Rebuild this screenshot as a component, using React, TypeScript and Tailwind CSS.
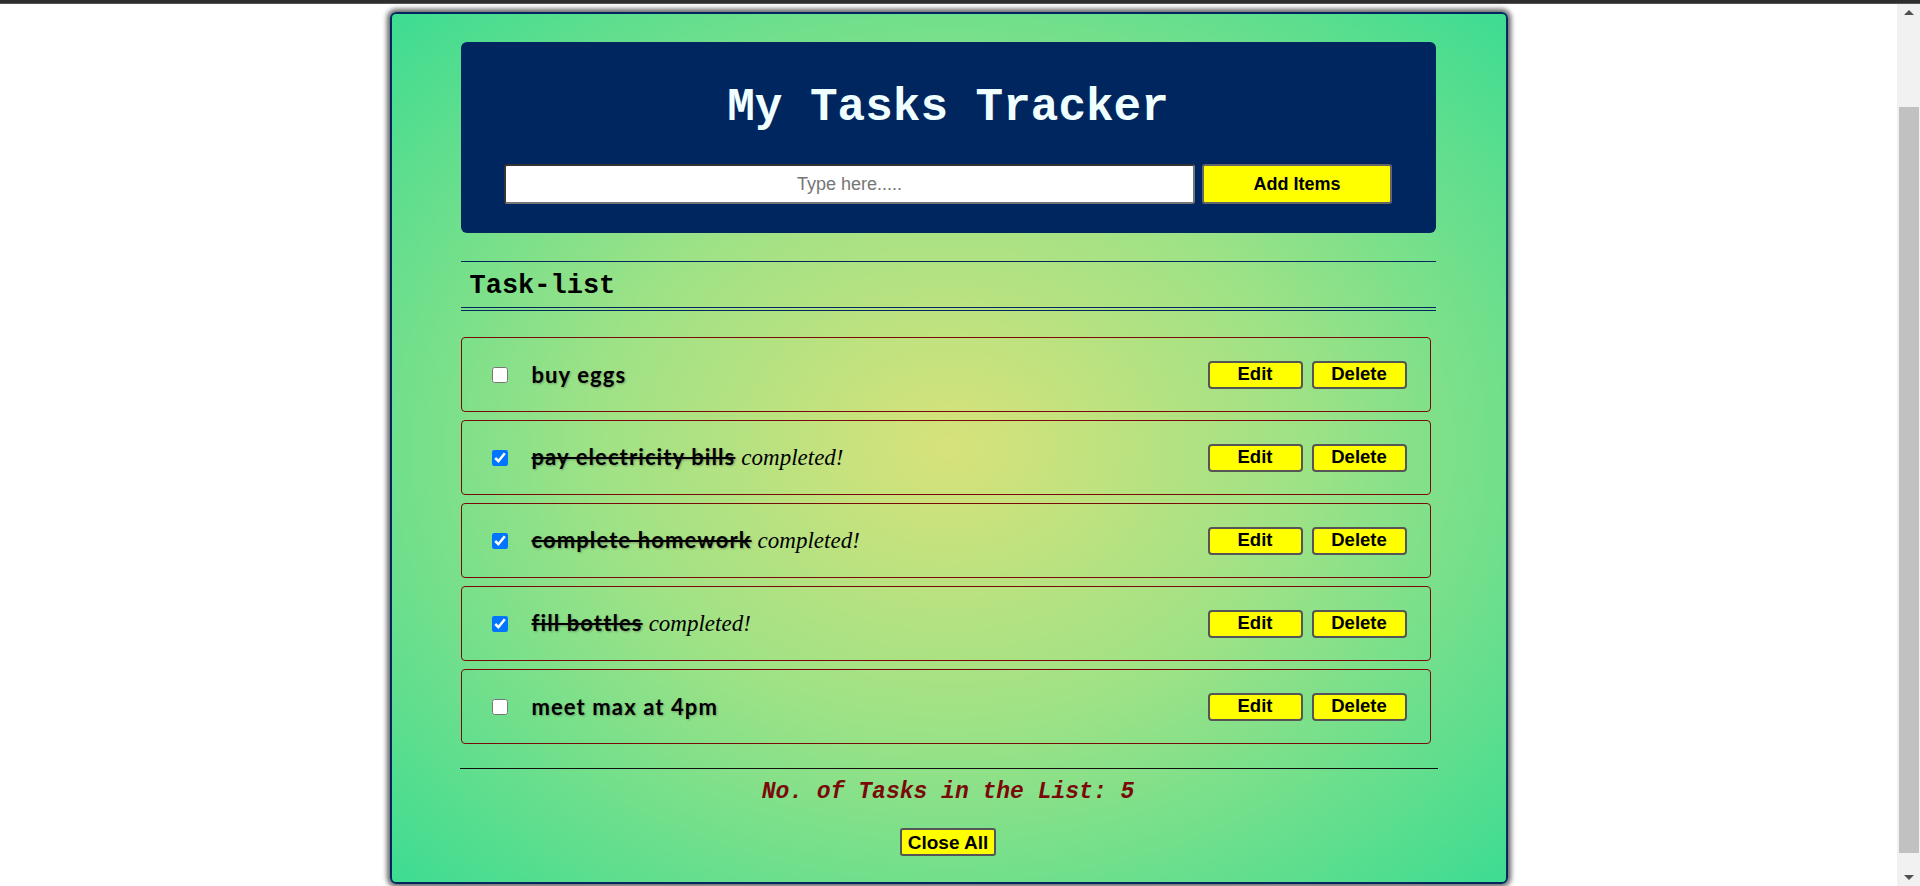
import React from "react";

type Task = { text: string; done: boolean };

const tasks: Task[] = [
  { text: "buy eggs", done: false },
  { text: "pay electricity bills", done: true },
  { text: "complete homework", done: true },
  { text: "fill bottles", done: true },
  { text: "meet max at 4pm", done: false },
];

function Row({ task }: { task: Task }) {
  return (
    <div className="w-[970px] h-[75px] flex items-center border border-[#7a0a0a] rounded-[4px] pl-[30px] pr-[23px]">
      <input
        type="checkbox"
        defaultChecked={task.done}
        className="w-[16px] h-[16px] m-0 shrink-0"
      />
      <div className="ml-[24px] flex-1 flex items-baseline">
        <span
          className={
            "font-['Lato','Open_Sans',sans-serif] font-bold text-[22px] tracking-[1.1px] text-black [text-shadow:1px_1px_2px_rgba(60,60,60,0.4)] " +
            (task.done ? "line-through" : "")
          }
        >
          {task.text}
        </span>
        {task.done && (
          <span className="ml-[6px] font-['Liberation_Serif',serif] italic text-[23px] text-black">
            completed!
          </span>
        )}
      </div>
      <div className="flex gap-[9px]">
        <button className="w-[95px] h-[28px] bg-[#ffff00] border-2 border-[#555] rounded-[4px] font-['Liberation_Sans',Arial,sans-serif] font-bold text-[18.5px] leading-none text-black">
          Edit
        </button>
        <button className="w-[95px] h-[28px] bg-[#ffff00] border-2 border-[#555] rounded-[4px] font-['Liberation_Sans',Arial,sans-serif] font-bold text-[18.5px] leading-none text-black">
          Delete
        </button>
      </div>
    </div>
  );
}

function Scrollbar() {
  return (
    <div className="w-[23px] shrink-0 bg-[#f1f1f1] flex flex-col">
      <div className="h-[17px] flex items-center justify-center">
        <div className="w-0 h-0 border-x-[5px] border-x-transparent border-b-[5px] border-b-[#505050]" />
      </div>
      <div className="h-[86px]" />
      <div className="h-[746px] w-[20px] ml-[2px] bg-[#c1c1c1]" />
      <div className="flex-1" />
      <div className="h-[17px] flex items-center justify-center">
        <div className="w-0 h-0 border-x-[5px] border-x-transparent border-t-[5px] border-t-[#505050]" />
      </div>
    </div>
  );
}

export default function App() {
  return (
    <div className="h-[886px] flex flex-col overflow-hidden bg-white font-['Liberation_Sans',Arial,sans-serif]">
      <div className="h-[4px] shrink-0 bg-[#2e2e2e] border-b border-[#555]" />
      <div className="flex flex-1 min-h-0">
        <div className="flex-1 min-w-0 flex justify-center pt-[8px]">
          <div className="w-[1118px] h-[872px] shrink-0 border-2 border-[#00265f] rounded-[6px] shadow-[0_0_5px_3px_rgba(0,0,0,0.6)] bg-[radial-gradient(ellipse_at_center,#d8e27a_0%,#9ee286_45%,#3ddc92_100%)] pt-[28px] px-[69px] flex flex-col items-start">
            <div className="w-[975px] h-[191px] bg-[#00265f] rounded-[6px] flex flex-col items-center pt-[40px]">
              <h1 className="h-[52px] leading-[52px] font-['Liberation_Mono','Courier_New',monospace] font-bold text-[46px] text-[#f0ffff]">
                My Tasks Tracker
              </h1>
              <div className="mt-[30px] flex gap-[7px] items-center">
                <input
                  type="text"
                  placeholder="Type here....."
                  className="w-[691px] h-[40px] bg-white border-2 border-t-[#333] border-l-[#333] border-b-[#777] border-r-[#777] rounded-[3px] text-center text-[18px] placeholder:text-[#757575] font-['Liberation_Sans',Arial,sans-serif] outline-none"
                />
                <button className="w-[190px] h-[40px] bg-[#ffff00] border-2 border-[#666] rounded-[3px] font-['Liberation_Sans',Arial,sans-serif] font-bold text-[18px] text-black">
                  Add Items
                </button>
              </div>
            </div>

            <div className="mt-[28px] w-[975px] h-[50px] border-t-[1.5px] border-t-[#00265f] border-b-[4px] border-double border-b-[#00265f] flex items-center pl-[9px]">
              <h2 className="font-['Liberation_Mono','Courier_New',monospace] font-bold text-[27px] text-black leading-none mt-[3px]">
                Task-list
              </h2>
            </div>

            <div className="mt-[26px] flex flex-col gap-[8px]">
              {tasks.map((t) => (
                <Row key={t.text} task={t} />
              ))}
            </div>

            <div className="mt-[24px] -ml-[1px] w-[978px] h-px bg-[#111]" />

            <div className="w-[975px] mt-[9px] text-center font-['Liberation_Mono','Courier_New',monospace] font-bold italic text-[23px] leading-[28px] text-[#7a0a0a]">
              No. of Tasks in the List: 5
            </div>

            <div className="w-[975px] mt-[22px] flex justify-center">
              <button className="h-[28px] px-[6px] bg-[#ffff00] border-2 border-[#555] rounded-[3px] font-['Liberation_Sans',Arial,sans-serif] font-bold text-[19px] leading-none text-black">
                Close All
              </button>
            </div>
          </div>
        </div>
        <Scrollbar />
      </div>
    </div>
  );
}
